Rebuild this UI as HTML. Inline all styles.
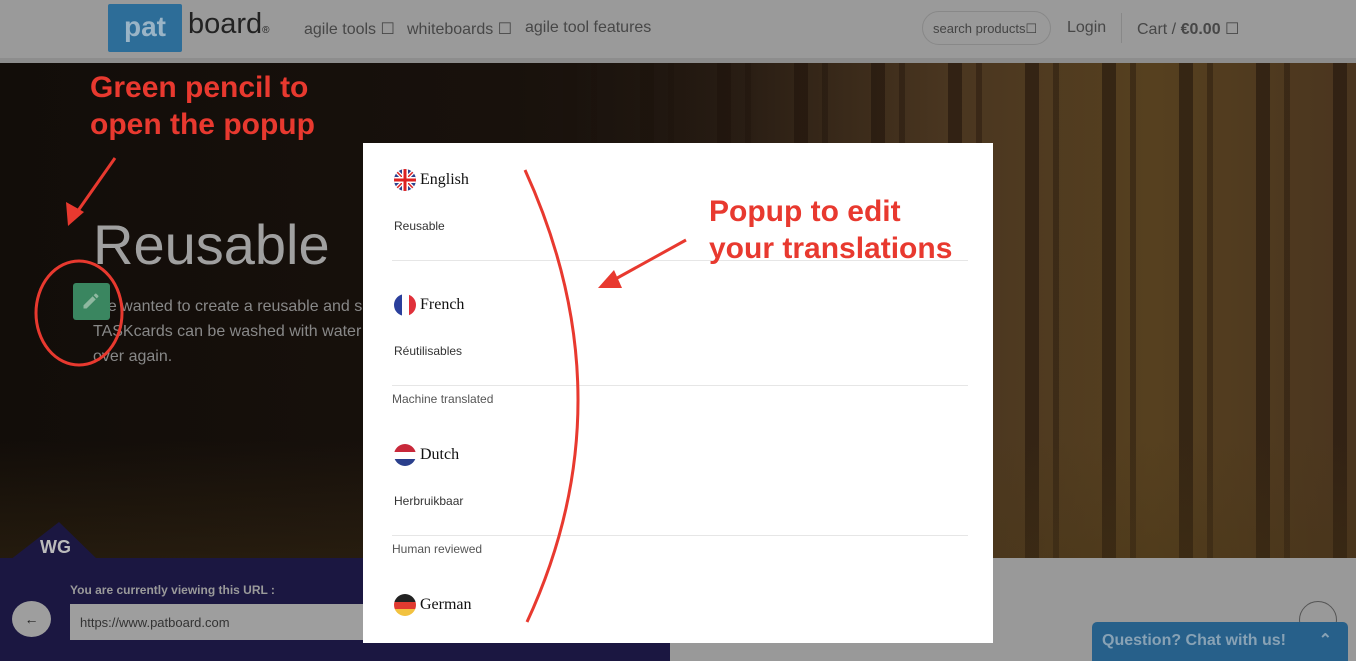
<!DOCTYPE html>
<html><head><meta charset="utf-8"><style>
*{margin:0;padding:0;box-sizing:border-box}
body{width:1356px;height:661px;overflow:hidden;position:relative;font-family:"Liberation Sans",sans-serif;background:#999}
.hdr{position:absolute;left:0;top:0;width:1356px;height:58px;background:#9a9a9a}
.hdr2{position:absolute;left:0;top:58px;width:1356px;height:5px;background:#8d8d8d}
.hero{position:absolute;left:0;top:63px;width:1356px;height:495px;
background:
repeating-linear-gradient(90deg,rgba(0,0,0,0) 0 24px,rgba(30,18,10,.55) 24px 38px,rgba(0,0,0,0) 38px 52px,rgba(30,18,10,.4) 52px 58px,rgba(0,0,0,0) 58px 77px),
linear-gradient(90deg,#120d09 0%,#17100b 30%,#2a1e14 55%,#4a3620 70%,#56401f 85%,#4a351f 100%)}
.heroL{position:absolute;left:0;top:63px;width:760px;height:495px;background:linear-gradient(90deg,#120d09,#18110c 65%,rgba(26,19,13,0))}
.heroB{position:absolute;left:0;top:440px;width:1356px;height:118px;background:linear-gradient(180deg,rgba(0,0,0,0),rgba(70,52,22,.35))}
.nav{position:absolute;top:19px;font-size:16px;color:#474747}
.popup{position:absolute;left:363px;top:143px;width:630px;height:500px;background:#fff}
.lang{position:absolute;left:31px;font-family:"Liberation Serif",serif;font-size:16px;color:#111;display:flex;align-items:center}
.flag{width:22px;height:22px;border-radius:50%;margin-right:4px;overflow:hidden}
.sm{position:absolute;left:31px;font-size:12px;color:#333}
.gr{position:absolute;left:29px;font-size:12px;color:#555}
.hr{position:absolute;left:29px;width:576px;height:1px;background:#e6e6e6}
.red{position:absolute;color:#e8392f;font-weight:bold;font-size:30px;line-height:37px}
</style></head><body>
<div class="hdr"></div><div class="hdr2"></div>
<div style="position:absolute;left:108px;top:4px;width:74px;height:48px;background:#2d6d98;border-radius:2px;color:#9ab4c6;font-size:28px;font-weight:bold;text-align:center;line-height:46px">pat</div>
<div style="position:absolute;left:188px;top:8px;font-size:29px;color:#222">board<span style="font-size:10px">®</span></div>
<div class="nav" style="left:304px">agile tools ☐</div>
<div class="nav" style="left:407px">whiteboards ☐</div>
<div class="nav" style="left:525px">agile tool features</div>
<div style="position:absolute;left:922px;top:11px;width:129px;height:34px;border:1px solid #888;border-radius:17px;font-size:13px;color:#444;padding:9px 0 0 10px">search products☐</div>
<div class="nav" style="left:1067px">Login</div>
<div style="position:absolute;left:1121px;top:13px;width:1px;height:30px;background:#888"></div>
<div class="nav" style="left:1137px">Cart / <b>€0.00</b> ☐</div>
<div class="hero"></div><div class="heroL"></div><div class="heroB"></div>
<div style="position:absolute;left:93px;top:212px;font-size:56px;color:#a0a0a0">Reusable</div>
<div style="position:absolute;left:93px;top:294px;font-size:16px;line-height:25px;color:#888">We wanted to create a reusable and s<br>TASKcards can be washed with water<br>over again.</div>
<div style="position:absolute;left:73px;top:283px;width:37px;height:37px;background:#3a8660;border-radius:3px"></div>
<svg style="position:absolute;left:81px;top:291px" width="20" height="20" viewBox="0 0 24 24"><path d="M3 17.3V21h3.7l11-11-3.7-3.7zM20.7 7a1 1 0 000-1.4l-2.3-2.3a1 1 0 00-1.4 0l-1.8 1.8 3.7 3.7z" fill="#8fb8a0"/></svg>
<div class="red" style="left:90px;top:69px">Green pencil to<br>open the popup</div>
<div style="position:absolute;left:0;top:558px;width:670px;height:103px;background:#1b1741"></div>
<svg style="position:absolute;left:10px;top:521px" width="90" height="40"><polygon points="0,39 49,1 88,39" fill="#1b1741"/><text x="30" y="32" font-family="Liberation Sans" font-weight="bold" font-size="18" fill="#bbb">WG</text></svg>
<div style="position:absolute;left:70px;top:583px;font-size:12px;font-weight:bold;color:#9a9a9a">You are currently viewing this URL :</div>
<div style="position:absolute;left:12px;top:601px;width:39px;height:36px;border-radius:50%;background:#9e9e9e;color:#222;text-align:center;line-height:36px;font-size:14px">←</div>
<div style="position:absolute;left:70px;top:604px;width:300px;height:36px;background:#9e9e9e;font-size:13px;color:#333;padding:11px 0 0 10px">https://www.patboard.com</div>
<div style="position:absolute;left:1299px;top:601px;width:38px;height:38px;border:1px solid #555;border-radius:50%"></div>
<div style="position:absolute;left:1092px;top:622px;width:256px;height:39px;background:#27608a;border-radius:5px 5px 0 0;color:#88a2b5;font-size:16px;font-weight:bold;padding:10px 0 0 10px">Question? Chat with us!<span style="position:absolute;right:16px;top:8px">⌃</span></div>
<div class="popup">
<div class="lang" style="top:26px"><svg class="flag" viewBox="0 0 22 22"><rect width="22" height="22" fill="#2a3f8c"/><path d="M0 0L22 22M22 0L0 22" stroke="#fff" stroke-width="4"/><path d="M0 0L22 22M22 0L0 22" stroke="#d22" stroke-width="1.5"/><path d="M11 0V22M0 11H22" stroke="#fff" stroke-width="6"/><path d="M11 0V22M0 11H22" stroke="#d22" stroke-width="3"/></svg>English</div>
<div class="sm" style="top:76px">Reusable</div>
<div class="hr" style="top:117px"></div>
<div class="lang" style="top:151px"><svg class="flag" viewBox="0 0 22 22"><rect width="8" height="22" fill="#2a3f9c"/><rect x="8" width="7" height="22" fill="#fff"/><rect x="15" width="7" height="22" fill="#e0303a"/></svg>French</div>
<div class="sm" style="top:201px">Réutilisables</div>
<div class="hr" style="top:242px"></div>
<div class="gr" style="top:249px">Machine translated</div>
<div class="lang" style="top:301px"><svg class="flag" viewBox="0 0 22 22"><rect width="22" height="8" fill="#c8283a"/><rect y="8" width="22" height="7" fill="#fff"/><rect y="15" width="22" height="7" fill="#2a3f8c"/></svg>Dutch</div>
<div class="sm" style="top:351px">Herbruikbaar</div>
<div class="hr" style="top:392px"></div>
<div class="gr" style="top:399px">Human reviewed</div>
<div class="lang" style="top:451px"><svg class="flag" viewBox="0 0 22 22"><rect width="22" height="8" fill="#222"/><rect y="8" width="22" height="7" fill="#e03a30"/><rect y="15" width="22" height="7" fill="#f2c240"/></svg>German</div>
</div>
<div class="red" style="left:709px;top:193px">Popup to edit<br>your translations</div>
<svg style="position:absolute;left:0;top:0" width="1356" height="661">
<g stroke="#e8392f" stroke-width="3" fill="none">
<path d="M525 170 Q630 400 527 622"/>
<path d="M115 158 L75 215"/>
<path d="M686 240 L610 282"/>
<ellipse cx="79" cy="313" rx="43" ry="52"/>
</g>
<polygon points="68,226 66,202 84,212" fill="#e8392f"/>
<polygon points="598,288 614,270 622,288" fill="#e8392f"/>
</svg>
</body></html>
